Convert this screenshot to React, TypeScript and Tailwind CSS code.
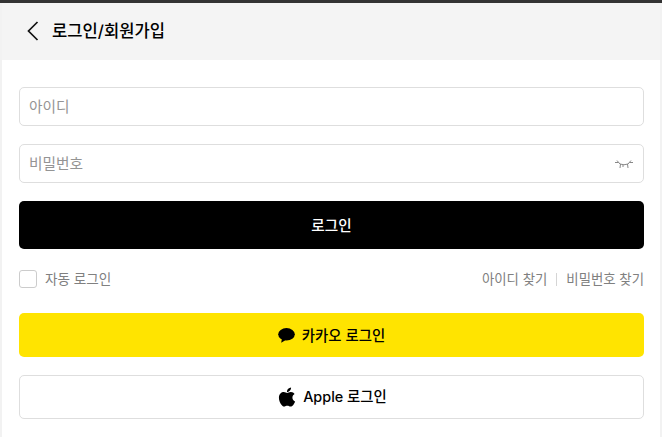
import React from 'react';
import { FaApple } from 'react-icons/fa';

export default function App() {
  return (
    <div
      className="h-[437px] w-[662px] overflow-hidden border-t-[3px] border-[#333333] bg-[#f2f2f2] pl-[2px] pr-[2px]"
      style={{ fontFamily: 'Inter, "Noto Sans CJK KR", "Noto Sans", sans-serif' }}
    >
      <div className="h-full bg-white">
        <header className="flex h-[57px] items-center bg-[#f4f4f4] pl-[24px]">
          <svg width="14" height="20" viewBox="0 0 14 20" fill="none" stroke="#111111" strokeWidth="1.7" className="-mt-[1px]">
            <path d="M11.5 1 L2.5 10 L11.5 19" />
          </svg>
          <h1 className="ml-[12px] text-[16.6px] font-medium text-black">로그인/회원가입</h1>
        </header>

        <main className="flex flex-col pl-[17px] pr-[16px] pt-[27px]">
          <div className="flex h-[39px] items-center rounded-[5px] border border-[#dedede] px-[9px] pt-[2px] text-[14.7px] text-[#949494]">
            아이디
          </div>
          <div className="mt-[18px] flex h-[39px] items-center justify-between rounded-[5px] border border-[#dedede] pl-[9px] pr-[9px] pt-[2px] text-[14.7px] text-[#949494]">
            <span>비밀번호</span>
            <svg width="20" height="12" viewBox="0 0 20 12" fill="none" stroke="#888888" strokeWidth="1">
              <path d="M3 1.5 L6 5 Q10 6.5 14 5 L17 1.5 M1 3.5 L4.5 3.5 M6.5 5 L6 9 M13.5 5 L14 9 M9 6 L9 8 M15.5 3.5 L19 3.5" />
            </svg>
          </div>
          <button className="mt-[18px] h-[48px] rounded-[5px] bg-black pt-[4px] text-[14.6px] font-medium text-white">로그인</button>

          <div className="mt-[20px] flex h-[19px] items-center justify-between text-[#808080]">
            <label className="flex items-center text-[13.6px]">
              <span className="h-[18px] w-[18px] rounded-[3px] border border-[#cccccc] bg-white" />
              <span className="ml-[8px] pt-[2px]">자동 로그인</span>
            </label>
            <div className="flex items-center pt-[2px] text-[13.4px]">
              <span>아이디 찾기</span>
              <span className="mx-[9px] h-[13px] w-px bg-[#d5d5d5]" />
              <span>비밀번호 찾기</span>
            </div>
          </div>

          <button className="mt-[25px] flex h-[44px] items-center justify-center gap-[7px] rounded-[5px] bg-[#ffe400] text-[14.4px] font-medium text-black">
            <svg width="17" height="15" viewBox="0 0 17 15" fill="black">
              <ellipse cx="8.5" cy="6.3" rx="8.3" ry="6.2" />
              <path d="M4 10 L3.2 14.8 L8.5 11.5 Z" />
            </svg>
            <span className="pt-[2px]">카카오 로그인</span>
          </button>
          <button className="mt-[18px] flex h-[44px] items-center justify-center gap-[5px] rounded-[5px] border border-[#dedede] bg-white text-[14.4px] font-medium text-black">
            <FaApple size={22} />
            <span>Apple 로그인</span>
          </button>
        </main>
      </div>
    </div>
  );
}
